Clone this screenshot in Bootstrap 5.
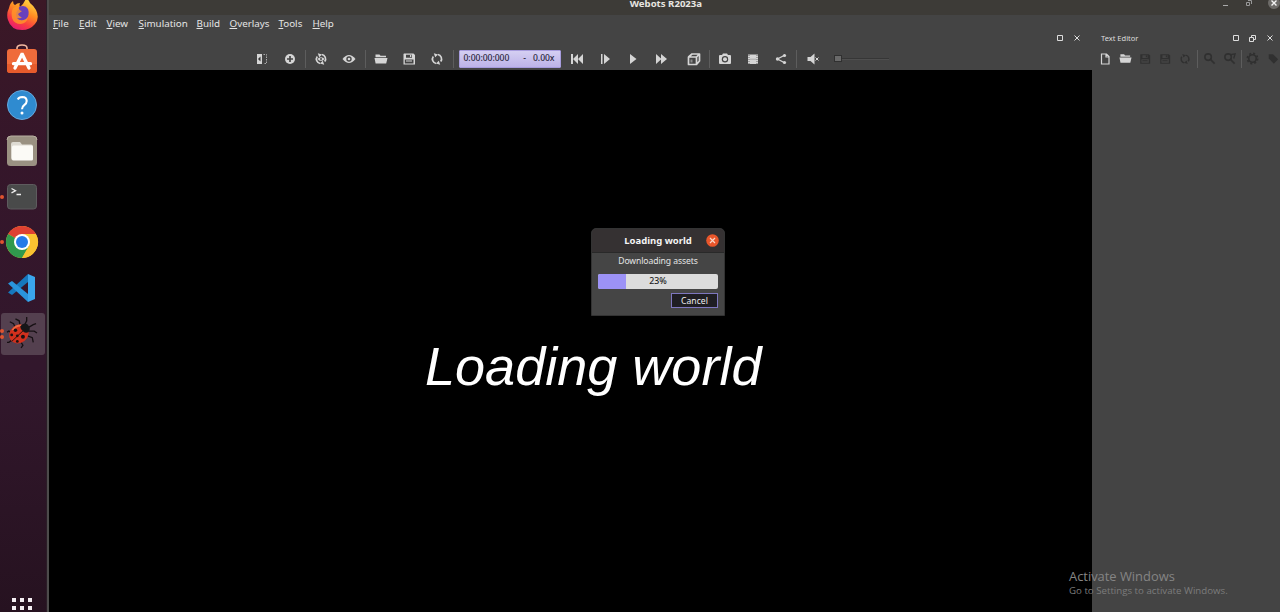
<!DOCTYPE html>
<html lang="en">
<head>
<meta charset="utf-8">
<meta name="viewport" content="width=device-width, initial-scale=1">
<title>Webots R2023a</title>
<link href="https://cdn.jsdelivr.net/npm/bootstrap@5.3.0/dist/css/bootstrap.min.css" rel="stylesheet">
<style>
body{font-family:"Noto Sans",sans-serif;background:#444;color:#e4e4e4;font-size:10px;line-height:1;width:1280px;height:612px}
svg{display:block;flex:none}
.dock{width:46px;background:linear-gradient(#3b1826 0,#35162a 25%,#32172c 60%,#261220 100%)}
.dock-list{margin-top:-8.5px}
.dock-item{height:45.6px}
.dock-item.active::before{content:"";position:absolute;inset:2px -1px 1px 1px;background:#54404f;border-radius:3px}
.dock-item svg{position:relative;overflow:visible}
.pip{position:absolute;left:0;width:4px;height:4px;border-radius:50%;background:#e0532f;top:21px;z-index:2}
.apps{padding:0 0 0 12px;height:14px}
.edge{width:3px;background:#4d4b4b;border-left:1px solid #2b1d27}
.titlebar{height:15px;background:#3d3b37}
.titlebar b{font-size:9.6px;line-height:8px;color:#e8e6e1}
.winbtns{right:2.500px;top:-3px;gap:17px}
.menus{height:17px}
.menus span{display:block;white-space:nowrap;line-height:17px;font-size:9.8px}
.menus u{text-underline-offset:1px}
.view-col{width:1043px}
.dockhead{height:16px}
.tools{height:22px;padding-bottom:1px;color:#d5d5d5}
.t{width:28px;display:flex;justify-content:center;flex:none}
.sep{width:1px;height:18px;background:#5d5d5d;flex:none}
.clock{width:102px;height:18px;margin:0 2px 0 3px;background:linear-gradient(#d5cff2,#bdb3e8);border:1px solid #a79cdd;color:#29263a;font-size:8.6px;border-radius:1px;padding:0 5px 0 4px;font-weight:500;letter-spacing:-.05px}
.slider{width:55px;height:7px;margin-left:7px}
.slider i{width:8px;height:7px;background:#6a6a6a;border:1px solid #303030}
.slider s{height:2px;background:#363636;border-bottom:1px solid #4f4f4f}
.stage{background:#000}
.big{font:italic 54px/1 "Liberation Sans",sans-serif;color:#fff;left:376px;top:269px;letter-spacing:.02px;white-space:nowrap}
.dlg{left:542px;top:158px;width:134px;height:88px;background:#454545;border-radius:5px 5px 0 0;border:1px solid #333}
.dlg-head{height:24px;background:#353132;border-bottom:1px solid #292929;border-radius:4px 4px 0 0}
.dlg-head b{font-size:9.500px;color:#f4f4f4}
.dlg-head svg{right:5px;top:5px}
.load{height:15px;background:#dcdcdc;border-radius:2px;margin:0 6px;color:#222;font-size:8.800px}
.load .progress-bar{background:#9c92f6}
.load em{font-style:normal;font-weight:500;inset:0;line-height:15px;text-align:center}
.cancel{width:47px;height:15px;border:1px solid #7e77bf;border-radius:0;background:#1f1e23;color:#eee;font-size:8.6px;line-height:12px;padding:0;margin:4px 6px 0 auto}
.side{background:#444;color:#dedede}
.side .t{width:20.1px}
.off{color:#303030}
.mark-win{left:1069px;top:569px;color:#858585;font-family:"Open Sans",sans-serif;white-space:nowrap}
.mark-win div{font-size:12.9px;line-height:14px}
.mark-win p{font-size:9.7px;line-height:14px;margin:1px 0 0;color:#7c7c7c}
</style>
</head>
<body class="d-flex overflow-hidden position-relative">
<svg width="0" height="0" class="position-absolute">
<defs>
<g id="sq"><path d="M.5.5h5v5h-5z" fill="none" stroke="#ddd"/></g>
<g id="xx"><path d="M.5.5l5 5m0-5l-5 5" fill="none" stroke="#ddd"/></g>
<g id="folder"><path d="M1.500 2.500h4l1 1.200h5.500v1.500H1.500zM.5 6h13l-1.300 5.500H1.600z" fill="currentColor"/></g>
<g id="disk"><path fill="currentColor" fill-rule="evenodd" d="M2 1.500h9.500L13 3v9.500H1.500V2zM4 2.700v3h6v-3zm-1.200 4.700v4h8.700v-4zM8 3h1.300v2H8zM4 8.500h6v1H4z"/></g>
<g id="reload" fill="none" stroke="currentColor" stroke-width="1.700"><path d="M6.200 11.500A4.500 4.500 0 0 1 3.300 4.400M7.800 2.500a4.500 4.500 0 0 1 2.900 7.100"/><path d="M3.800 1.200L8 2.600 5.200 5.200zM10.200 12.800L6 11.400l2.800-2.600z" fill="currentColor" stroke="none"/></g>
<g id="lens" fill="none" stroke="currentColor" stroke-width="1.700"><circle cx="5.500" cy="5.500" r="3.500"/><path d="M8 8l4.500 4.500"/></g>
</defs>
</svg>

<nav class="dock d-flex flex-column justify-content-between flex-shrink-0">
<div class="dock-list d-flex flex-column" style="padding-right:2px">
<div class="dock-item d-flex align-items-center justify-content-center position-relative">
<svg width="31" height="31" viewBox="0 0 31 31"><defs><linearGradient id="ff" x1=".8" y1="0" x2=".3" y2="1"><stop offset="0" stop-color="#ffe64a"/><stop offset=".45" stop-color="#ff8a22"/><stop offset=".75" stop-color="#fa3c43"/><stop offset="1" stop-color="#e61c73"/></linearGradient></defs><path fill="url(#ff)" d="M2 9Q3 4 6 2q0 3 2 4 2-2 5-2-1 2 0 4Q17 5 19-1q3 2 4 5 4 3 6 7 4 8-1 14-5 6-13 6Q4 31 1 21-1 15 2 9z"/><circle cx="15" cy="15.500" r="6" fill="#6b43c7"/><path fill="#ff9729" d="M6 9q5-3 9 1l5 1q-2 3-6 3-2 3 1 5 3 2 6-1-1 6-7 7-7 0-9-6-1-6 1-10z" opacity=".8"/><path fill="#6840bd" d="M12 8q6-3 9 2 2 6-2 10-6 3-9-1 4 1 6-1-4 0-5-3l4-3q-4-1-3-4z"/></svg></div>
<div class="dock-item d-flex align-items-center justify-content-center position-relative">
<svg width="30" height="30" viewBox="0 0 30 30"><path d="M10 6V3q0-3 5-3t5 3v3" fill="none" stroke="#f2b9a0" stroke-width="1.600"/><rect y="4" width="30" height="24" rx="3" fill="#ef6b3b"/><path d="M0 19h30v6q0 3-3 3H3q-3 0-3-3z" fill="#e65b2c"/><path d="M8 23L14.800 9.500h.6L22 23M6.500 18.700h17" fill="none" stroke="#fff" stroke-width="3.300" stroke-linecap="round"/></svg></div>
<div class="dock-item d-flex align-items-center justify-content-center position-relative">
<svg width="30" height="30" viewBox="0 0 30 30"><circle cx="15" cy="15" r="14.500" fill="#2f8bd0" stroke="#65a8dc"/><path d="M10.800 9.500q1-2.500 4.400-2.500 4.500.1 4.500 4 0 2.300-2.500 4.100-2.200 1.600-2.200 4.100" fill="none" stroke="#fff" stroke-width="2.100"/><circle cx="15" cy="23" r="1.500" fill="#fff"/></svg></div>
<div class="dock-item d-flex align-items-center justify-content-center position-relative">
<svg width="30" height="30" viewBox="0 0 30 30"><rect width="30" height="30" rx="3.500" fill="#9a9182"/><path d="M0 4q0-4 4-4h22q4 0 4 4" fill="none" stroke="#b7afa1"/><path d="M4 8q0-2 2-2h7l2 2.500h9q2 0 2 2V22q0 2-2 2H6q-2 0-2-2z" fill="#dedbd3"/><rect x="5" y="9.500" width="21" height="15" rx="1.500" fill="#fbfaf6"/></svg></div>
<div class="dock-item d-flex align-items-center justify-content-center position-relative"><span class="pip"></span>
<svg width="30" height="26" viewBox="0 0 30 26"><rect x=".5" y=".5" width="29" height="24.500" rx="3" fill="#494a4a" stroke="#5e5b5e"/><path d="M4.500 4.500l4 2.200-4 2.200M9.500 10.500h4.500" fill="none" stroke="#eee" stroke-width="1.300"/></svg></div>
<div class="dock-item d-flex align-items-center justify-content-center position-relative"><span class="pip"></span>
<svg width="32" height="32" viewBox="0 0 32 32"><circle cx="16" cy="16" r="16" fill="#f9c231"/><path d="M16 16L2.140 8A16 16 0 0 1 29.860 8z" fill="#de4132"/><path d="M2.140 8A16 16 0 0 0 16 32l6.900-12L16 16z" fill="#30994d"/><path d="M29.860 8H16l-2 3 9 9-7 12A16 16 0 0 0 29.860 8z" fill="#f9c231"/><circle cx="16" cy="16" r="8" fill="#fff"/><circle cx="16" cy="16" r="6" fill="#267be8"/></svg></div>
<div class="dock-item d-flex align-items-center justify-content-center position-relative">
<svg width="28" height="28" viewBox="0 0 28 28"><path d="M20 0l7 3v22l-7 3z" fill="#3aa6ed"/><path d="M20 0v8L4 21 0 18.500z" fill="#1678bd"/><path d="M20 28v-8L4 7 0 9.500z" fill="#2a94db"/></svg></div>
<div class="dock-item active d-flex align-items-center justify-content-center position-relative"><span class="pip" style="top:18px"></span><span class="pip" style="top:24px"></span>
<svg width="30" height="32" viewBox="0 0 32 32"><g fill="none" stroke="#171014" stroke-width="1.400"><path d="M9 11L7 6 3 4M14 8l-1-5-4-2M19 7l2-4 0-4M23 10l5-3 3-1M23 14l6 0 3 2M22 19l5 2 1 5M5 16l-3-2-2 1M6 23l-4 3-2 0M15 26l2 3-2 3"/></g><ellipse cx="12.500" cy="17.500" rx="11" ry="9.500" transform="rotate(-38 12 17)" fill="#d2301d"/><path d="M6 13q3-5 9-5" stroke="#f06a42" fill="none" stroke-width="2"/><path d="M14 9q4-5 8-2 4 4 1 8-3 2-6-1t-3-5z" fill="#171719"/><path d="M20 11L5 25" stroke="#241311"/><g fill="#1b1213"><circle cx="9" cy="13" r="1.900"/><circle cx="17" cy="20" r="2.100"/><circle cx="5" cy="18" r="1.500"/><circle cx="11" cy="25" r="1.500"/><circle cx="11" cy="19" r="1.500"/></g></svg></div>
</div>
<div class="apps"><svg width="22" height="14" fill="#f4eef2"><path d="M0 0h4v4H0zM8 0h4v4H8zM16 0h4v4h-4zM0 8h4v4H0zM8 8h4v4H8zM16 8h4v4h-4z"/></svg></div>
</nav>
<div class="edge flex-shrink-0"></div>

<main class="d-flex flex-column flex-grow-1">
<header class="titlebar position-relative text-center flex-shrink-0"><b class="d-block">Webots R2023a</b>
<div class="winbtns position-absolute d-flex align-items-center"><svg width="6" height="12"><path d="M0 8.500h5" stroke="#aaa"/></svg><svg width="6" height="12" fill="none" stroke="#999"><path d="M.5 5.500h3v3h-3zM2 3.500h3.500V7"/></svg><svg width="12" height="12" style="margin-left:-1px"><circle cx="6" cy="6" r="6" fill="#6d6b68"/><path d="M3.500 3.500l5 5m0-5l-5 5" stroke="#f4f4f4" stroke-width="1.400"/></svg></div>
</header>
<div class="menus d-flex flex-shrink-0">
<span style="margin-left:4px;width:26px"><u>F</u>ile</span><span style="width:27.500px"><u>E</u>dit</span><span style="width:32px"><u>V</u>iew</span><span style="width:58px"><u>S</u>imulation</span><span style="width:33px"><u>B</u>uild</span><span style="width:49px"><u>O</u>verlays</span><span style="width:34px"><u>T</u>ools</span><span><u>H</u>elp</span>
</div>
<div class="d-flex flex-grow-1">
<section class="view-col d-flex flex-column flex-shrink-0">
<div class="dockhead d-flex justify-content-end align-items-start" style="padding:3px 12px 0 0;gap:11px"><svg width="6" height="6"><use href="#sq"/></svg><svg width="6" height="6"><use href="#xx"/></svg></div>
<div class="tools d-flex align-items-center flex-shrink-0" style="padding-left:199px">
<span class="t"><svg width="14" height="14"><path d="M2 2h5v10H2z" fill="currentColor"/><path d="M5.500 4.500L3 7l2.500 2.500z" fill="#333"/><path d="M8.500 2.500h3v9h-3" fill="none" stroke="#aaa" stroke-dasharray="1.500 1"/></svg></span>
<span class="t"><svg width="14" height="14"><circle cx="7" cy="7" r="5" fill="currentColor"/><path d="M7 4v6M4 7h6" stroke="#444" stroke-width="1.700"/></svg></span>
<span class="sep" style="margin:0 1px 0 1px"></span>
<span class="t"><svg width="14" height="14"><use href="#reload"/><ellipse cx="7" cy="7" rx="3" ry="1.800" fill="currentColor"/><circle cx="7" cy="7" r="1" fill="#444"/></svg></span>
<span class="t"><svg width="14" height="14"><path d="M.5 7Q7-1 13.500 7 7 15 .5 7z" fill="currentColor"/><circle cx="7" cy="7" r="2.700" fill="#444"/><circle cx="7" cy="7" r="1.300" fill="currentColor"/></svg></span>
<span class="sep" style="margin:0 1px 0 2px"></span>
<span class="t"><svg width="14" height="14"><use href="#folder"/></svg></span>
<span class="t"><svg width="14" height="14"><use href="#disk"/></svg></span>
<span class="t"><svg width="14" height="14"><use href="#reload"/></svg></span>
<span class="sep" style="margin:0 2px 0 1.500px"></span>
<div class="clock d-flex align-items-center flex-shrink-0"><span>0:00:00:000</span><span class="ms-auto">-</span><span style="margin-left:7px">0.00x</span></div>
<span class="t"><svg width="14" height="14" fill="currentColor"><path d="M1 2h2v10H1zM8 2v10L3 7zM13 2v10L8 7z"/></svg></span>
<span class="t"><svg width="14" height="14" fill="currentColor"><path d="M3 2h1.500v10H3zM6 2l6 5-6 5z"/></svg></span>
<span class="t"><svg width="14" height="14" fill="currentColor"><path d="M4 2l6.500 5L4 12z"/></svg></span>
<span class="t"><svg width="14" height="14" fill="currentColor"><path d="M2 2l5.500 5L2 12zM7 2l6 5-6 5z"/></svg></span>
<span class="t" style="margin-left:5px"><svg width="14" height="14"><path d="M1.500 5h8v7.500h-8zM1.500 5L5 2h7.500l-3 3M12.500 2v7l-3 3.500" fill="none" stroke="currentColor" stroke-width="1.700" stroke-linejoin="round"/><path d="M3.500 7.500h2v3h-2z" fill="currentColor" opacity=".5"/></svg></span>
<span class="sep" style="margin:0 1px"></span>
<span class="t"><svg width="14" height="14"><path d="M1 4q0-1 1-1h2l1-1.500h4L10 3h2q1 0 1 1v7q0 1-1 1H2q-1 0-1-1z" fill="currentColor"/><circle cx="7" cy="7.300" r="3.200" fill="#444"/><circle cx="7" cy="7.300" r="2" fill="currentColor"/></svg></span>
<span class="t"><svg width="14" height="14"><path d="M2 2.500h10v9.500H2z" fill="currentColor"/><path d="M3 3v9M11 3v9" stroke="#666" stroke-dasharray="1 1"/><path d="M4 7.200h6" stroke="#aaa"/></svg></span>
<span class="t"><svg width="14" height="14"><path d="M11 3L3.500 7l7.500 4" fill="none" stroke="currentColor" stroke-width="1.300"/><g fill="currentColor"><circle cx="10.500" cy="3.500" r="1.600"/><circle cx="3.500" cy="7" r="1.700"/><circle cx="10.500" cy="10.500" r="1.600"/></g></svg></span>
<span class="sep" style="margin:0 1.500px"></span>
<span class="t"><svg width="14" height="14"><path d="M1.500 5h3L8.500 1.500v11L4.500 9h-3z" fill="currentColor"/><path d="M9.500 5.500l3 3M12.500 5.500l-3 3" stroke="currentColor"/></svg></span>
<div class="slider d-flex align-items-center"><i></i><s class="flex-grow-1"></s></div>
</div>
<div class="stage flex-grow-1 position-relative">
<div class="big position-absolute">Loading world</div>
<div class="dlg position-absolute">
<div class="dlg-head position-relative d-flex align-items-center justify-content-center"><b>Loading world</b><svg class="position-absolute" width="13" height="13"><circle cx="6.500" cy="6.500" r="6.300" fill="#e9562b"/><path d="M4 4l5 5m0-5L4 9" stroke="#fbd7c8" stroke-width="1.200"/></svg></div>
<div class="text-center" style="font-size:8.6px;letter-spacing:-.08px;line-height:17px;height:21px">Downloading assets</div>
<div class="load progress position-relative"><div class="progress-bar" style="width:23%"></div><em class="position-absolute">23%</em></div>
<button class="cancel btn d-block">Cancel</button>
</div>
</div>
</section>
<aside class="side flex-grow-1 overflow-hidden">
<div class="dockhead d-flex align-items-start" style="padding:3px 9.500px 0 9px"><span style="font-size:7.500px;line-height:7px">Text Editor</span><div class="ms-auto d-flex" style="gap:10px;margin-right:.5px"><svg width="6" height="6"><use href="#sq"/></svg><svg width="8" height="7" fill="none" stroke="#ddd"><path d="M.5 2.500h4v4h-4zM2.500 2.500v-2h4v4h-2"/></svg><svg width="6" height="6"><use href="#xx"/></svg></div></div>
<div class="tools d-flex align-items-center" style="padding-left:3px">
<span class="t"><svg width="12" height="14"><path d="M2.500 2h5l2.500 2.500v7.500H2.500zM7 2v3h3" fill="none" stroke="currentColor" stroke-width="1.200"/></svg></span>
<span class="t"><svg width="13" height="13" viewBox="0 0 14 14"><use href="#folder"/></svg></span>
<span class="t off"><svg width="12" height="12" viewBox="0 0 14 14"><use href="#disk"/></svg></span>
<span class="t off"><svg width="12" height="12" viewBox="0 0 14 14"><use href="#disk"/></svg></span>
<span class="t off"><svg width="12" height="12" viewBox="0 0 14 14"><use href="#reload"/></svg></span>
<span class="sep" style="margin:0 1.500px"></span>
<span class="t off"><svg width="13" height="13" viewBox="0 0 14 14"><use href="#lens"/></svg></span>
<span class="t off"><svg width="13" height="13" viewBox="0 0 14 14"><use href="#lens"/><path d="M8 3l5-1-1.500 5" fill="none" stroke="currentColor" stroke-width="1.500"/></svg></span>
<span class="sep" style="margin:0 1px"></span>
<span class="t off"><svg width="13" height="13" viewBox="0 0 14 14" fill="none" stroke="currentColor"><circle cx="7" cy="7" r="4" stroke-width="1.800"/><circle cx="7" cy="7" r="5.500" stroke-width="1.800" stroke-dasharray="2.200 2.120"/></svg></span>
<span class="t off"><svg width="12" height="13" viewBox="0 0 14 14"><path d="M2 2h5l6 6-5 5-6-6z" fill="currentColor"/></svg></span>
</div>
</aside>
</div>
</main>
<div class="mark-win position-absolute"><div>Activate Windows</div><p>Go to Settings to activate Windows.</p></div>
<script src="https://cdn.jsdelivr.net/npm/bootstrap@5.3.0/dist/js/bootstrap.bundle.min.js"></script>
</body>
</html>
